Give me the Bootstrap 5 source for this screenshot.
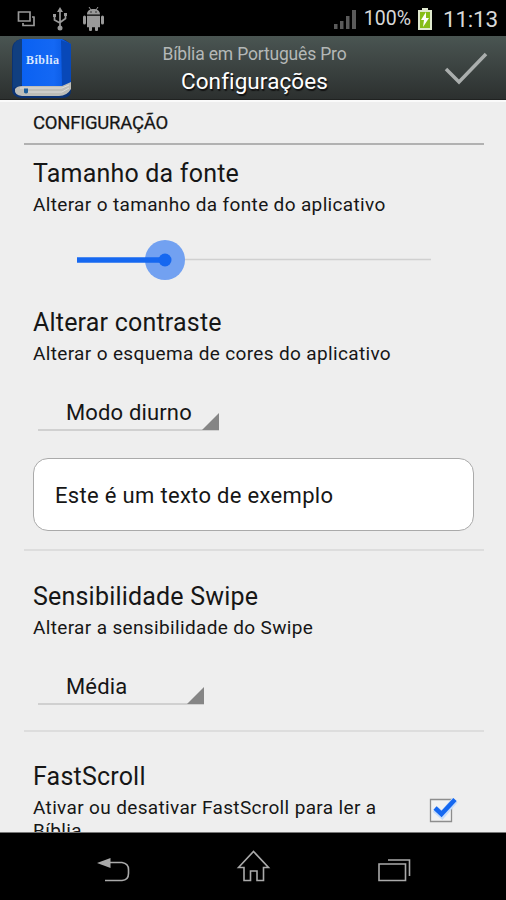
<!DOCTYPE html>
<html lang="pt">
<head>
<meta charset="utf-8">
<meta name="viewport" content="width=device-width, initial-scale=1">
<title>Configurações</title>
<link href="https://cdn.jsdelivr.net/npm/bootstrap@5.3.0/dist/css/bootstrap.min.css" rel="stylesheet">
<style>
body{font-family:Roboto,"Liberation Sans",sans-serif;background:#000;color:#161616}
svg{display:block;flex:none}
.phone{width:506px;height:900px}
.statusbar{height:36px;color:#d8d8d8;padding:2px 8px 0 17px}
.pct{font-size:19.5px;line-height:34px;letter-spacing:0;margin-left:8px}
.battery{margin-left:7px}
.clock{font-size:22.5px;line-height:34px;letter-spacing:-.2px;margin-left:11px}
.appbar{height:64px;background:linear-gradient(#4a5552,#2c302f);border-bottom:1px solid #202221;padding:0 18px 0 11px}
.app-titles{margin-right:8px}
.app-sub{font-size:17.5px;line-height:24px;color:#b4b8b7;letter-spacing:-.17px;padding-top:2px}
.app-title{font-size:22.5px;line-height:30px;color:#fff;letter-spacing:.1px;text-shadow:1px 2px 1px #111}
.settings{background:#eee;border-top:2px solid #fafafa;border-bottom:1px solid #777;height:733px}
.settings-list{margin-right:-2px}
.heading{font-size:18.5px;line-height:43px;height:43px;padding-left:9px;letter-spacing:-.25px;border-bottom:2px solid #b1b1b1;-webkit-text-stroke:.25px #161616}
.setting{padding:0 10px 0 9px}
.divided{border-bottom:2px solid #ddd}
.name{font-size:25px;line-height:30px;letter-spacing:.2px}
.desc{font-size:19px;line-height:23px;letter-spacing:.35px;padding-top:4px}
.slider{margin:24px 0 0 44px;height:40px}
.chooser{margin-left:5px;height:34px;border-bottom:2px solid #d0d0d0;font-size:22px;line-height:32px;padding-left:28px;letter-spacing:.15px}
.corner{width:17px;height:17px;background:#858585;clip-path:polygon(100% 0,100% 100%,0 100%);margin-bottom:-1px}
.sample{height:73px;border:1.5px solid #aaa;border-radius:15px;background:#fff;font-size:22px;padding:2px 20px 0 21px;letter-spacing:.32px}
.opt-size{padding-top:14px}
.opt-contrast{padding-top:28px}
.opt-contrast .chooser{margin-top:32px;width:181px}
.opt-contrast .sample{margin-top:27px;margin-bottom:18px}
.opt-swipe{padding-top:31px;padding-bottom:25px}
.opt-swipe .chooser{margin-top:32px;width:166px}
.opt-scroll{padding-top:30px}
.tick{margin:33px 16px 0 0}
.navkeys{height:67px}
</style>
</head>
<body>
<div class="phone d-flex flex-column overflow-hidden">
  <div class="statusbar d-flex align-items-center">
    <svg width="90" height="26" viewBox="0 0 90 26" fill="none" stroke="#999" stroke-width="1.700">
      <path d="M1.500 6h11.500v9H1.500zM17 10.500v9H6v-2.500M15 11h2.500"/>
      <path d="M43 3v19M37.500 10v4l5.500 3M48.500 8.500v4l-5.500 4"/>
      <path d="M40 6l3-5 3 5zM36 8h3v3h-3zM47 7h3v3h-3z" fill="#999" stroke="none"/><circle cx="43" cy="22" r="2.500" fill="#999" stroke="none"/>
      <g fill="#999" stroke="none"><path d="M70 8.500c0-4 3-5.500 6.500-5.500s6.500 1.500 6.500 5.500zM70 9.700h13v11.500H70z"/><rect x="66" y="9.500" width="3" height="9" rx="1.500"/><rect x="84" y="9.500" width="3" height="9" rx="1.500"/><rect x="72" y="19" width="3" height="6" rx="1"/><rect x="78" y="19" width="3" height="6" rx="1"/></g>
      <path d="M72 1l2 3M81 1l-2 3" stroke-width="1"/><path d="M73.500 6h1M78.500 6h1" stroke="#111"/>
    </svg>
    <svg class="ms-auto" width="22" height="22" viewBox="0 0 22 22" fill="#5a5a5a"><path d="M0 16h3.500v5H0zM6 13h3.500v8H6zM12 8h3.500v13H12zM18 2h4v19h-4z"/></svg>
    <span class="pct">100%</span>
    <svg class="battery" width="14" height="22" viewBox="0 0 14 22"><path d="M4 0h6v2h4v20H0V2h4z" fill="#dfe8ce"/><path d="M2 4h10v16H2z" fill="#87bd18"/><path d="M8 4L3 12h3l-1 7 6-9H8z" fill="#fff"/></svg>
    <span class="clock">11:13</span>
  </div>

  <header class="appbar d-flex align-items-center">
    <svg width="62" height="62" viewBox="0 0 62 62">
      <defs><linearGradient id="cover"><stop stop-color="#0a61f2"/><stop offset=".65" stop-color="#1468f4"/><stop offset="1" stop-color="#0653d9"/></linearGradient></defs>
      <path d="M10 2h40q10 1 10 12v40q0 7-9 7H10Q1 60 1 52V13Q1 4 10 2z" fill="#0b3273"/>
      <path d="M10 2Q2 4 2 13v38l9-3V2z" fill="#113f80"/>
      <path d="M11 2h40l9 5v40l-9 2H11z" fill="url(#cover)"/>
      <path d="M50 3l10 4v40l-9 2z" fill="#0848b8"/>
      <path d="M4 52q2-3 7-3h40l9-4v7q-4 7-12 7H11q-8-1-7-7z" fill="#bdbdb8"/>
      <path d="M9 51h42l7-3M17 55h34l7-4" stroke="#ddd" fill="none"/>
      <path d="M13 51.500h4v4q-2 2-4 0z" fill="#1c5d9a"/>
      <text x="31.500" y="26.500" text-anchor="middle" textLength="33" font-family="Liberation Serif,serif" font-weight="700" font-size="12" fill="#d9e6ff">Bíblia</text>
    </svg>
    <div class="app-titles flex-fill text-center">
      <div class="app-sub">Bíblia em Português Pro</div>
      <div class="app-title">Configurações</div>
    </div>
    <svg width="44" height="34" viewBox="0 0 44 34"><path d="M2 18l13 13L42 3" fill="none" stroke="#aaaead" stroke-width="3.500"/></svg>
  </header>

  <main class="settings overflow-hidden px-4">
    <div class="settings-list">
    <div class="heading">CONFIGURAÇÃO</div>
    <section class="setting opt-size">
      <div class="name">Tamanho da fonte</div>
      <div class="desc">Alterar o tamanho da fonte do aplicativo</div>
      <svg class="slider" width="356" height="40" viewBox="0 0 356 40"><path d="M88 19.500h266" stroke="#d0d0d0" stroke-width="1.500"/><circle cx="88" cy="20" r="20" fill="#72a1f1"/><path d="M0 20h88" stroke="#1668f0" stroke-width="5.500"/><circle cx="88" cy="20" r="6.500" fill="#1668f0"/></svg>
    </section>
    <section class="setting divided opt-contrast">
      <div class="name">Alterar contraste</div>
      <div class="desc">Alterar o esquema de cores do aplicativo</div>
      <div class="chooser d-flex justify-content-between align-items-end"><span>Modo diurno</span><i class="corner"></i></div>
      <div class="sample d-flex align-items-center"><span>Este é um texto de exemplo</span></div>
    </section>
    <section class="setting divided opt-swipe">
      <div class="name">Sensibilidade Swipe</div>
      <div class="desc">Alterar a sensibilidade do Swipe</div>
      <div class="chooser d-flex justify-content-between align-items-end"><span>Média</span><i class="corner"></i></div>
    </section>
    <section class="setting opt-scroll d-flex">
      <div class="flex-fill">
        <div class="name">FastScroll</div>
        <div class="desc">Ativar ou desativar FastScroll para ler a<br>Bíblia</div>
      </div>
      <svg class="tick" width="30" height="30" viewBox="0 0 30 30"><path d="M2.500 4.500h21v22h-21z" fill="#f2f2f2" stroke="#8d8d8d" stroke-width="1.300"/><path d="M7 14l7 6L27 5" fill="none" stroke="#c5dcfb" stroke-width="7"/><path d="M7 13l6.500 6L27 4.500" fill="none" stroke="#1668f0" stroke-width="4.500"/></svg>
    </section>
    </div>
  </main>

  <nav class="navkeys">
    <svg width="506" height="67" viewBox="0 0 506 67" fill="none" stroke="#aaa" stroke-width="1.600">
      <path d="M110 29.500h12q6.500 1 6.500 7v4q0 6.500-6.500 7h-17"/><path d="M97 30l13.500-5v10z" fill="#aaa" stroke="none"/>
      <path d="M238.500 34.500L253.500 18.500l15 16h-5v13h-6.500v-9.500h-6.500v9.500h-6.500v-13z"/>
      <path d="M379 31h26.500v16.500H379zM388 27h21.500v16"/>
    </svg>
  </nav>
</div>
<script src="https://cdn.jsdelivr.net/npm/bootstrap@5.3.0/dist/js/bootstrap.bundle.min.js"></script>
</body>
</html>
